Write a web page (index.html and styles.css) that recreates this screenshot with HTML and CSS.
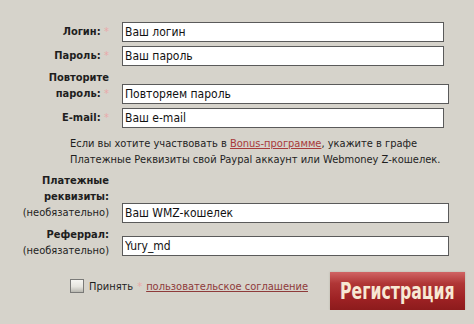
FILE: index.html
```html
<!DOCTYPE html>
<html lang="ru">
<head>
   <meta charset="UTF-8">
   <meta name="viewport" content="width=device-width, initial-scale=1.0">
   <title>Регистрация</title>
   <link rel="stylesheet" href="styles.css">
</head>
<body>
   <form class="reg">
      <div class="row">
         <label class="lbl">Логин: <span class="req">*</span></label>
         <input class="fld" type="text" value="Ваш логин">
      </div>
      <div class="row">
         <label class="lbl">Пароль: <span class="req">*</span></label>
         <input class="fld" type="text" value="Ваш пароль">
      </div>
      <div class="row row-tall">
         <label class="lbl">Повторите<br>пароль: <span class="req">*</span></label>
         <input class="fld wide" type="text" value="Повторяем пароль">
      </div>
      <div class="row">
         <label class="lbl">E-mail: <span class="req">*</span></label>
         <input class="fld" type="text" value="Ваш e-mail">
      </div>
      <p class="note">
         Если вы хотите участвовать в <a href="#">Bonus-программе</a>, укажите в графе<br>
         Платежные Реквизиты свой Paypal аккаунт или Webmoney Z-кошелек.
      </p>
      <div class="row row-tall">
         <label class="lbl">Платежные<br>реквизиты:<br><span class="opt">(необязательно)</span></label>
         <input class="fld wide" type="text" value="Ваш WMZ-кошелек">
      </div>
      <div class="row row-ref">
         <label class="lbl">Реферрал:<br><span class="opt">(необязательно)</span></label>
         <input class="fld wide" type="text" value="Yury_md">
      </div>
      <div class="bottom">
         <label class="agree"><span class="check"></span>Принять <span class="req">*</span> <a href="#">пользовательское соглашение</a></label>
         <button class="btn" type="button"><span class="btn-txt">Регистрация</span></button>
      </div>
   </form>
</body>
</html>
```

FILE: styles.css
```css
*{
   margin: 0;
   padding: 0;
   box-sizing: border-box;
}

body{
   background: #d6d3cb;
   color: #1e1e1e;
   font-family: "DejaVu Sans Condensed", "DejaVu Sans", sans-serif;
   font-stretch: condensed;
   font-size: 11px;
}

.reg{
   padding-top: 22px;
}

.row{
   display: flex;
   align-items: flex-end;
   margin-bottom: 4px;
}

.row-tall{
   margin-top: 4px;
}

.row-ref .lbl{
   padding-bottom: 0;
}

.row-ref .fld{
   margin-bottom: 3px;
}

.lbl{
   width: 109px;
   text-align: right;
   font-weight: bold;
   line-height: 16px;
   padding-bottom: 2px;
   margin-right: 13px;
}

.req{
   color: #eaa9a9;
   font-weight: normal;
}

.opt{
   font-weight: normal;
}

.fld{
   width: 322px;
   height: 20px;
   border: 1px solid #5a5a5a;
   background: #fff;
   font-family: inherit;
   font-stretch: condensed;
   font-size: 12px;
   color: #111;
   padding: 0 2px;
}

.fld.wide{
   width: 327px;
}

.note{
   padding: 4px 0 0 70px;
   line-height: 16px;
   margin-bottom: 5px;
}

.note a{
   color: #a83a3a;
}

.agree a{
   color: #8e3a3a;
}

.bottom{
   display: flex;
   align-items: center;
   padding: 9px 9px 0 70px;
}

.agree{
   display: flex;
   align-items: center;
   gap: 4px;
   margin-top: -10px;
}

.check{
   width: 14px;
   height: 14px;
   border: 1px solid #7a7a78;
   background: linear-gradient(#f6f6f2, #e6e5df 55%, #b9b8b1);
   margin-right: 1px;
}

.btn{
   margin-left: auto;
   width: 135px;
   height: 38px;
   border: none;
   background: linear-gradient(#d06464, #b03636 30%, #9e2224 70%, #8c1b1c);
   color: #f7e8d4;
   box-shadow: 0 0 2px #b7b3aa;
   display: flex;
   align-items: center;
   justify-content: center;
}

.btn-txt{
   display: inline-block;
   font-family: "DejaVu Sans Condensed", "DejaVu Sans", sans-serif;
   font-stretch: condensed;
   font-weight: bold;
   font-size: 23px;
   transform: scaleX(0.76);
   white-space: nowrap;
}
```
